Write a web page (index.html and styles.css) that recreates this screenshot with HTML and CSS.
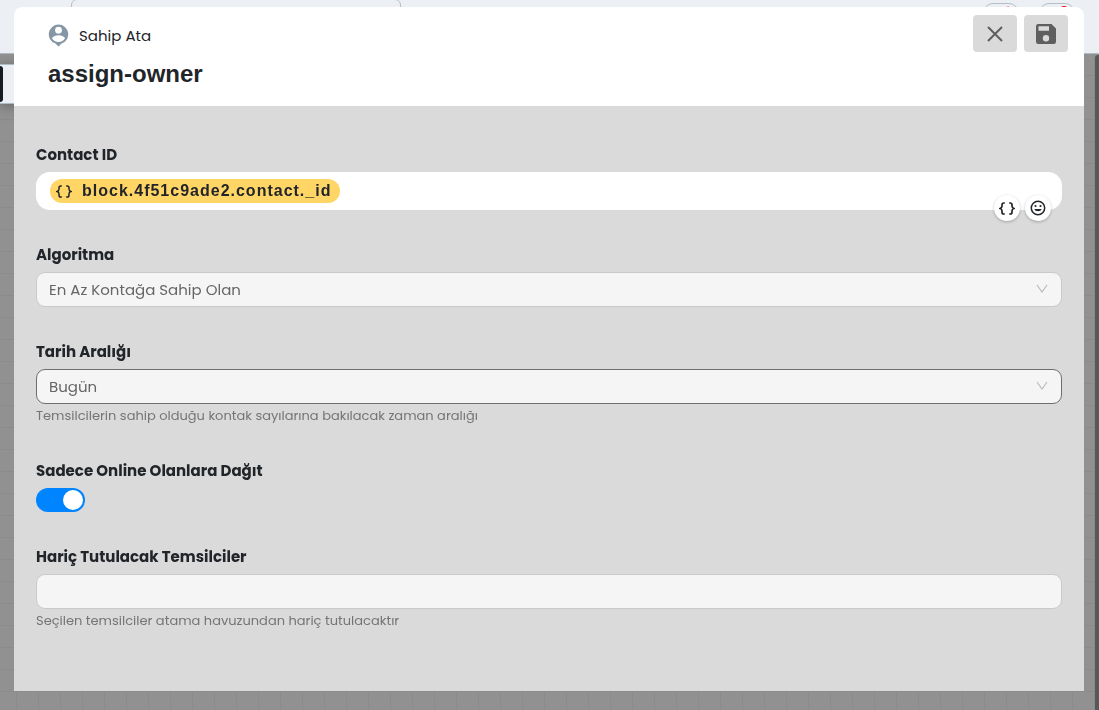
FILE: index.html
```html
<!DOCTYPE html>
<html lang="tr">
<head>
    <meta charset="UTF-8">
    <meta name="viewport" content="width=device-width, initial-scale=1.0">
    <title>Sahip Ata</title>
    <link rel="stylesheet" href="styles.css">
</head>
<body>
<div class="page">
    <div class="topbar">
        <div class="topbar-search"></div>
        <div class="topbar-actions">
            <div class="topbar-pill"><span class="dot light"></span></div>
            <div class="topbar-pill"><span class="dot"></span></div>
        </div>
    </div>
    <div class="canvas">
        <div class="toolbar"><div class="toolbar-tab"></div></div>
    </div>
    <div class="scrollbar"></div>
</div>

<div class="overlay">
    <form class="modal" role="dialog" aria-labelledby="modalTitle">
        <div class="modal-header">
            <div class="modal-heading">
                <div class="modal-type">
                    <svg width="21" height="23" viewBox="0 0 21 23">
                        <path fill="#8796a5" d="M10.5 0.5a9.800 9.800 0 0 1 3 19.100l-3 3-3-3A9.800 9.800 0 0 1 10.5 0.5z"/>
                        <circle cx="10.5" cy="6.2" r="3.4" fill="#fff"/>
                        <path fill="#fff" d="M3.9 14.3c1.200-2 4-3.100 6.600-3.100s5.400 1.100 6.600 3.100c-1.300 2.300-3.800 3.700-6.600 3.700s-5.300-1.400-6.600-3.700z"/>
                    </svg>
                    <span>Sahip Ata</span>
                </div>
                <h2 id="modalTitle">assign-owner</h2>
            </div>
            <div class="modal-buttons">
                <button type="button" aria-label="Kapat">
                    <svg width="16" height="16" viewBox="0 0 16 16" stroke="#5f5f5f" stroke-width="2">
                        <path d="M1 1l14 14M15 1L1 15"/>
                    </svg>
                </button>
                <button type="submit" aria-label="Kaydet">
                    <svg width="20" height="20" viewBox="0 0 20 20">
                        <path fill="#5f5f5f" fill-rule="evenodd" d="M2.200 0H15.500L20 4.500V17.800A2.200 2.200 0 0 1 17.800 20H2.200A2.200 2.200 0 0 1 0 17.800V2.200A2.200 2.200 0 0 1 2.200 0zM2.500 2.300V6.800H13V2.300zM10 11a3.200 3.200 0 1 0 0 6.400a3.200 3.200 0 1 0 0-6.400z"/>
                    </svg>
                </button>
            </div>
        </div>

        <div class="modal-body">
            <div class="field">
                <label for="contactId">Contact ID</label>
                <div class="token-box">
                    <span class="token">
                        <svg width="16" height="13" viewBox="0 0 16 13" fill="none" stroke="#212529" stroke-width="1.500">
                            <path d="M5.800 1H4.800Q3 1 3 2.800V4.300Q3 5.900 1 6.500Q3 7.100 3 8.700V10.200Q3 12 4.800 12H5.800M10.200 1H11.200Q13 1 13 2.800V4.300Q13 5.900 15 6.500Q13 7.100 13 8.700V10.200Q13 12 11.200 12H10.200"/>
                        </svg>
                        block.4f51c9ade2.contact._id
                    </span>
                    <input type="text" id="contactId">
                    <div class="token-actions">
                        <button type="button" aria-label="Değişken ekle">
                            <svg width="16" height="13" viewBox="0 0 16 13" fill="none" stroke="#212529" stroke-width="1.700">
                                <path d="M5.800 1H4.800Q3 1 3 2.800V4.300Q3 5.900 1 6.500Q3 7.100 3 8.700V10.200Q3 12 4.800 12H5.800M10.200 1H11.200Q13 1 13 2.800V4.300Q13 5.900 15 6.500Q13 7.100 13 8.700V10.200Q13 12 11.200 12H10.200"/>
                            </svg>
                        </button>
                        <button type="button" aria-label="Emoji ekle">
                            <svg width="16" height="16" viewBox="0 0 16 16">
                                <circle cx="8" cy="8" r="6.700" fill="none" stroke="#212529" stroke-width="1.500"/>
                                <circle cx="5.500" cy="6" r="1.100" fill="#212529"/>
                                <circle cx="10.500" cy="6" r="1.100" fill="#212529"/>
                                <path fill="#212529" d="M4.200 9h7.600a4 3.400 0 0 1-7.600 0z"/>
                            </svg>
                        </button>
                    </div>
                </div>
            </div>

            <div class="field">
                <label for="algorithm">Algoritma</label>
                <div class="select-box">
                    <select id="algorithm">
                        <option>En Az Kontağa Sahip Olan</option>
                    </select>
                    <svg width="12" height="9" viewBox="0 0 12 9" fill="none" stroke="#bbb" stroke-width="1.200">
                        <path d="M1 1l5 7 5-7"/>
                    </svg>
                </div>
            </div>

            <div class="field">
                <label for="dateRange">Tarih Aralığı</label>
                <div class="select-box">
                    <select id="dateRange" class="active">
                        <option>Bugün</option>
                    </select>
                    <svg width="12" height="9" viewBox="0 0 12 9" fill="none" stroke="#bbb" stroke-width="1.200">
                        <path d="M1 1l5 7 5-7"/>
                    </svg>
                </div>
                <p class="help">Temsilcilerin sahip olduğu kontak sayılarına bakılacak zaman aralığı</p>
            </div>

            <div class="field">
                <label for="onlineOnly">Sadece Online Olanlara Dağıt</label>
                <input type="checkbox" id="onlineOnly" class="switch" checked>
            </div>

            <div class="field">
                <label for="excluded">Hariç Tutulacak Temsilciler</label>
                <input type="text" id="excluded" class="text-input">
                <p class="help">Seçilen temsilciler atama havuzundan hariç tutulacaktır</p>
            </div>
        </div>
    </form>
</div>
</body>
</html>
```

FILE: styles.css
```css
* {
    margin: 0;
    padding: 0;
    box-sizing: border-box;
}

body {
    font-family: Poppins, Inter, sans-serif;
    font-size: 15px;
    color: #212529;
    height: 100vh;
    overflow: hidden;
}

button {
    border: none;
    cursor: pointer;
}

svg {
    flex: none;
}

/* page behind the dialog */
.page {
    display: flex;
    flex-direction: column;
    height: 100vh;
}

.topbar {
    display: flex;
    justify-content: space-between;
    height: 54px;
    padding: 0 24px 0 71px;
    background: #ecf0f5;
    border-bottom: 1px solid #aebbc4;
}

.topbar-search {
    width: 330px;
    height: 34px;
    margin-top: -1px;
    border: 1px solid #b4c0c6;
    border-radius: 6px;
}

.topbar-actions {
    display: flex;
    gap: 20px;
    padding-top: 3px;
}

.topbar-pill {
    display: flex;
    justify-content: center;
    width: 36px;
    height: 36px;
    padding: 2px 0 0 14px;
    border: 1px solid #b4c0c6;
    border-radius: 10px;
}

.dot {
    width: 8px;
    height: 8px;
    border-radius: 50%;
    background: #e0101c;
}

.dot.light {
    width: 4px;
    background: #ff9a9a;
}

.canvas {
    flex: 1;
    padding-top: 10px;
    background-color: #919191;
    background-image: linear-gradient(#8b8b8b 1px, transparent 1px), linear-gradient(90deg, #8b8b8b 1px, transparent 1px);
    background-size: 22px 22px;
    background-position: 16px 21px;
}

.toolbar {
    width: 50%;
    height: 40px;
    padding-top: 1px;
    background: #ecf0f5;
    border-top: 1px solid #aebbc4;
    border-bottom: 1px solid #aebbc4;
    box-shadow: 0 2px 12px #666;
}

.toolbar-tab {
    width: 3px;
    height: 36px;
    border-radius: 0 5px 5px 0;
    background: #171b24;
}

.scrollbar {
    position: fixed;
    top: 55px;
    right: 0;
    bottom: 0;
    width: 4px;
    border-radius: 3px 0 0 0;
    background: #585858;
}

/* dialog */
.overlay {
    position: fixed;
    inset: 0;
    display: flex;
    padding: 7px 15px 19px 14px;
}

.modal {
    flex: 1;
    display: flex;
    flex-direction: column;
    background: #dadada;
    border-radius: 8px 8px 0 0;
    overflow: hidden;
}

.modal-header {
    display: flex;
    justify-content: space-between;
    align-items: flex-start;
    padding: 8px 16px 15px 34px;
    background: #fff;
}

.modal-heading {
    display: flex;
    flex-direction: column;
    gap: 9px;
    padding-top: 8px;
}

.modal-type {
    display: flex;
    align-items: center;
    gap: 10px;
    height: 25px;
}

.modal-heading h2 {
    font-family: Helvetica, "Liberation Sans", Arial, sans-serif;
    font-size: 24px;
    line-height: 34px;
}

.modal-buttons {
    display: flex;
    gap: 7px;
}

.modal-buttons button {
    display: flex;
    align-items: center;
    justify-content: center;
    width: 44px;
    height: 37px;
    background: #dadada;
    border-radius: 4px;
}

.modal-body {
    flex: 1;
    display: flex;
    flex-direction: column;
    gap: 33px;
    padding: 37px 22px;
}

.field label {
    display: block;
    margin-bottom: 5px;
    line-height: 24px;
    font-weight: bold;
}

.token-box {
    position: relative;
    display: flex;
    align-items: center;
    height: 38px;
    padding: 0 14px;
    background: #fff;
    border-radius: 14px;
}

.token {
    display: flex;
    align-items: center;
    gap: 10px;
    height: 24px;
    padding: 0 9px 0 6px;
    background: #ffd666;
    border-radius: 12px;
    font-family: Helvetica, "Liberation Sans", Arial, sans-serif;
    font-size: 16px;
    font-weight: bold;
    letter-spacing: 1px;
}

.token-box input {
    flex: 1;
    min-width: 0;
    border: none;
    outline: none;
    background: transparent;
}

.token-actions {
    position: absolute;
    right: 11px;
    bottom: -11px;
    display: flex;
    gap: 5px;
}

.token-actions button {
    display: flex;
    align-items: center;
    justify-content: center;
    width: 26px;
    height: 26px;
    background: #fff;
    border-radius: 50%;
    box-shadow: 0 1px 3px rgba(0, 0, 0, 0.25);
}

.select-box {
    position: relative;
}

.select-box select, .text-input {
    display: block;
    width: 100%;
    height: 35px;
    padding: 0 12px;
    appearance: none;
    background: #f5f5f5;
    border: 1px solid #c9c9c9;
    border-radius: 9px;
    font-family: inherit;
    font-size: 15px;
    color: #666;
}

.select-box select.active {
    border-color: #6e6e6e;
}

.select-box svg {
    position: absolute;
    right: 14px;
    top: 12px;
    pointer-events: none;
}

.help {
    margin-top: 2px;
    font-size: 13px;
    line-height: 20px;
    color: #757575;
}

.switch {
    display: flex;
    align-items: center;
    justify-content: flex-end;
    width: 49px;
    height: 24px;
    padding: 2px;
    appearance: none;
    background: #ababab;
    border-radius: 12px;
    cursor: pointer;
}

.switch::before {
    content: "";
    width: 20px;
    height: 20px;
    border-radius: 50%;
    background: #fff;
}

.switch:not(:checked) {
    justify-content: flex-start;
}

.switch:checked {
    background: #0084ff;
}
```
